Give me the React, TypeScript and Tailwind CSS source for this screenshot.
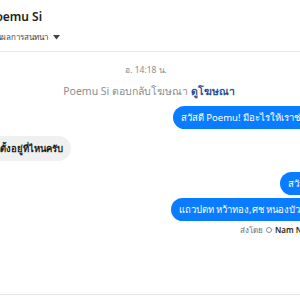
export default function App() {
  return (
    <div className="w-[300px] h-[300px] overflow-hidden bg-white font-['Noto_Sans','Liberation_Sans',sans-serif]">
      <div className="w-[388px] -ml-[44px] h-[300px] flex flex-col">
        {/* header */}
        <div className="h-[52px] flex flex-col pl-[32px] pt-[9px] border-b border-[#e6e6e6]">
          <div className="text-[12px] font-semibold text-[#1c1e21] leading-[16px]">Poemu Si</div>
          <div className="flex items-center gap-[5px] mt-[6px] ml-[4px] text-[8px] text-[#444] leading-[12px]">
            <span>ในผลการสนทนา</span>
            <svg width="7" height="5" viewBox="0 0 7 5">
              <path d="M0 0h7L3.5 4.5z" fill="#444" />
            </svg>
          </div>
        </div>

        {/* messages */}
        <div className="flex-1 flex flex-col border-b border-[#e6e6e6] pr-[8px]">
          <div className="mt-[12px] text-center text-[8.5px] text-[#8a8d91] leading-[12px]">อ. 14:18 น.</div>
          <div className="mt-[9px] text-center text-[10.5px] text-[#8a8d91] leading-[13px] pl-[6px]">
            Poemu Si ตอบกลับโฆษณา <span className="font-semibold text-[#2d4f8e]">ดูโฆษณา</span>
          </div>

          <div className="mt-[8px] flex justify-end">
            <div className="bg-[#0a7cff] text-white text-[9.5px] leading-[13px] px-[8px] py-[5px] rounded-[14px]">
              สวัสดี Poemu! มีอะไรให้เราช่วยไหม
            </div>
          </div>

          <div className="mt-[7px] flex justify-start pl-[20px]">
            <div className="bg-[#f0f0f0] text-[#1c1e21] font-semibold text-[9.5px] leading-[13px] px-[8px] py-[6px] rounded-[14px]">
              ร้านตั้งอยู่ที่ไหนครับ
            </div>
          </div>

          <div className="mt-[11px] flex justify-end">
            <div className="bg-[#0a7cff] text-white text-[9.5px] leading-[13px] px-[8px] py-[5px] rounded-[14px]">
              สวัสดีครับ
            </div>
          </div>

          <div className="mt-[3px] flex justify-end">
            <div className="bg-[#0a7cff] text-white text-[9.5px] leading-[13px] px-[8px] py-[5px] rounded-[14px]">
              แถวปตท หว้าทอง,ศช หนองบัวแดงค่ะ
            </div>
          </div>

          <div className="mt-[3px] flex items-center gap-[3px] pl-[284px] text-[8px] text-[#65676b] leading-[12px] whitespace-nowrap">
            <span>ส่งโดย</span>
            <span className="w-[6px] h-[6px] rounded-full border border-[#8a8d91]" />
            <span className="font-semibold text-[#1c1e21]">Nam Noi</span>
          </div>
        </div>
        <div className="h-[5px]" />
      </div>
    </div>
  );
}
